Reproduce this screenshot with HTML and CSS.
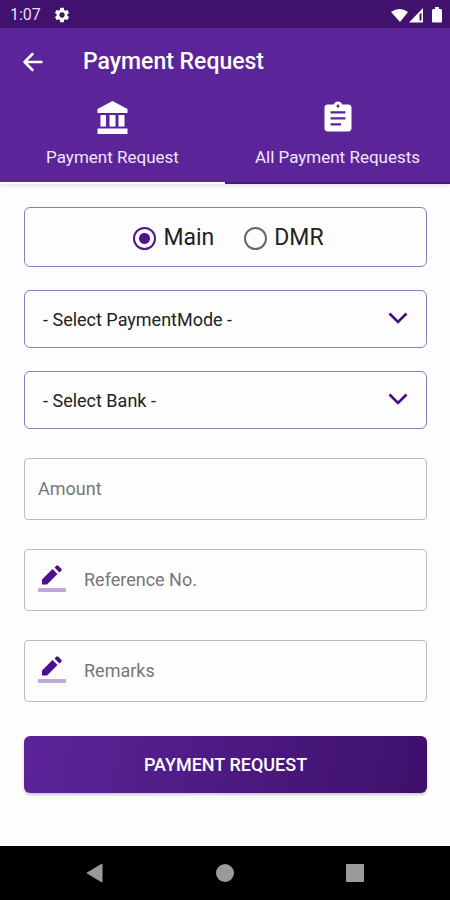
FILE: index.html
```html
<!DOCTYPE html>
<html lang="en">
<head>
<meta charset="utf-8">
<meta name="viewport" content="width=device-width, initial-scale=1">
<title>Payment Request</title>
<link rel="stylesheet" href="styles.css">
</head>
<body>
<div class="screen">
  <div class="status">
    <span class="time">1:07</span>
    <svg class="gear" viewBox="0 0 24 24" width="18" height="18" aria-hidden="true"><path fill="currentColor" d="M19.14 12.94c.04-.3.06-.61.06-.94 0-.32-.02-.64-.07-.94l2.03-1.58c.18-.14.23-.41.12-.61l-1.92-3.32c-.12-.22-.37-.29-.59-.22l-2.39.96c-.5-.38-1.03-.7-1.62-.94l-.36-2.54c-.04-.24-.24-.41-.48-.41h-3.84c-.24 0-.43.17-.47.41l-.36 2.54c-.59.24-1.13.57-1.62.94l-2.39-.96c-.22-.08-.47 0-.59.22L2.74 8.87c-.12.21-.08.47.12.61l2.03 1.58c-.05.3-.09.63-.09.94s.02.64.07.94l-2.03 1.58c-.18.14-.23.41-.12.61l1.92 3.32c.12.22.37.29.59.22l2.39-.96c.5.38 1.03.7 1.62.94l.36 2.54c.05.24.24.41.48.41h3.84c.24 0 .44-.17.47-.41l.36-2.54c.59-.24 1.13-.56 1.62-.94l2.39.96c.22.08.47 0 .59-.22l1.92-3.32c.12-.22.07-.47-.12-.61l-2.01-1.58zM12 15.6c-1.98 0-3.6-1.62-3.6-3.6s1.62-3.6 3.6-3.6 3.6 1.62 3.6 3.6-1.62 3.6-3.6 3.6z"/></svg>
    <svg class="signals" viewBox="0 0 54 18" width="54" height="18" aria-hidden="true">
      <path fill="currentColor" d="M1 6Q9.500 0 18 6L10 16ZM19 16.500 33 2V16.500Z"/>
      <path class="signal-gap" d="M29.500 8V14.500H31.500V7Z"/>
      <path fill="currentColor" d="M43 3H45V1H49V3H51Q52 3 52 5V15Q52 16.500 51 16.500H43Q42 16.500 42 15V5Q42 3 43 3Z"/>
    </svg>
  </div>
  <header class="top">
    <div class="bar">
      <button class="back" type="button" aria-label="Back"><svg viewBox="0 0 28 28" width="28" height="28"><path d="M22.500 14H6M13.500 6 5.500 14l8 8" fill="none" stroke="currentColor" stroke-width="2.500" stroke-linecap="round" stroke-linejoin="round"/></svg></button>
      <h1 class="title">Payment Request</h1>
    </div>
    <nav class="tabs">
      <a class="tab active" href="#request" aria-current="page">
        <svg viewBox="0 0 36 36" width="36" height="36" aria-hidden="true"><path fill="currentColor" d="M17.500 1 32.500 9V13H2.500V9ZM5.500 15h5.500v11.500H5.500ZM14.500 15h6v11.500h-6ZM23.500 15h6v11.500h-6ZM2.500 28.500h30v5.500H2.500Z"/></svg>
        <span>Payment Request</span>
      </a>
      <a class="tab" href="#all">
        <svg viewBox="0 0 24 24" width="36" height="36" aria-hidden="true"><path fill="currentColor" fill-rule="evenodd" d="M19 3h-4.180C14.400 1.840 13.300 1 12 1S9.600 1.840 9.180 3H5c-1.100 0-2 .9-2 2v14c0 1.100.9 2 2 2h14c1.100 0 2-.9 2-2V5c0-1.100-.9-2-2-2Zm-7 0c.55 0 1 .45 1 1s-.45 1-1 1-1-.45-1-1 .45-1 1-1Zm2 14H7v-1.500h7v1.500Zm3-4H7v-1.500h10v1.500Zm0-4H7V7.500h10v1.500Z"/></svg>
        <span>All Payment Requests</span>
      </a>
    </nav>
  </header>
  <form class="form">
    <div class="box types" role="radiogroup" aria-label="Wallet">
      <label class="choice"><input type="radio" name="wallet" checked><span>Main</span></label>
      <label class="choice"><input type="radio" name="wallet"><span>DMR</span></label>
    </div>
    <div class="box pick">
      <select class="select" aria-label="Payment mode"><option>- Select PaymentMode -</option></select>
      <svg class="chevron" viewBox="0 0 20 14" width="20" height="14" aria-hidden="true"><path d="M1.500 1.500 10 10l8.500-8.500" fill="none" stroke="currentColor" stroke-width="2.600"/></svg>
    </div>
    <div class="box pick">
      <select class="select" aria-label="Bank"><option>- Select Bank -</option></select>
      <svg class="chevron" viewBox="0 0 20 14" width="20" height="14" aria-hidden="true"><path d="M1.500 1.500 10 10l8.500-8.500" fill="none" stroke="currentColor" stroke-width="2.600"/></svg>
    </div>
    <div class="box field">
      <input class="input" type="text" inputmode="decimal" placeholder="Amount" aria-label="Amount">
    </div>
    <div class="box field">
      <svg class="pen" viewBox="0 0 28 28" width="28" height="28" aria-hidden="true"><path class="pen-line" d="M0 23H28V27H0Z"/><path fill="currentColor" d="M4 14.500 14.500 4l5 5L9 19.500H4ZM16.500 2.500l1.800-1.800q1-.8 2 0l3 3q.8 1 0 2L21.500 7.500Z"/></svg>
      <input class="input" type="text" placeholder="Reference No." aria-label="Reference No.">
    </div>
    <div class="box field">
      <svg class="pen" viewBox="0 0 28 28" width="28" height="28" aria-hidden="true"><path class="pen-line" d="M0 23H28V27H0Z"/><path fill="currentColor" d="M4 14.500 14.500 4l5 5L9 19.500H4ZM16.500 2.500l1.800-1.800q1-.8 2 0l3 3q.8 1 0 2L21.500 7.500Z"/></svg>
      <input class="input" type="text" placeholder="Remarks" aria-label="Remarks">
    </div>
    <button class="submit" type="submit">PAYMENT REQUEST</button>
  </form>
  <div class="system">
    <button class="key" type="button" aria-label="System back"><svg viewBox="0 0 20 20" width="20" height="20"><path d="M17 1V19L2 10Z" fill="currentColor" stroke="currentColor" stroke-linejoin="round"/></svg></button>
    <button class="key" type="button" aria-label="Home"><svg viewBox="0 0 20 20" width="20" height="20"><circle cx="10" cy="10" r="9" fill="currentColor"/></svg></button>
    <button class="key" type="button" aria-label="Recent apps"><svg viewBox="0 0 20 20" width="20" height="20"><rect x="1" y="1" width="18" height="18" rx="1" fill="currentColor"/></svg></button>
  </div>
</div>
</body>
</html>
```
FILE: styles.css
```css
* { box-sizing: border-box; }

body {
  margin: 0;
  background: #fdfdfd;
  color: #222;
  font-family: Roboto, "Liberation Sans", sans-serif;
}

button, input, select { font: inherit; }

svg { display: block; flex: none; }

.screen {
  display: flex;
  flex-direction: column;
  min-height: 100vh;
}

.status {
  display: flex;
  align-items: center;
  height: 28px;
  padding: 2px 6px 0 10px;
  background: #40116d;
  color: #fff;
}

.time {
  font-size: 16px;
  line-height: 20px;
  color: #e6dcee;
}

.gear { margin-left: 12px; }
.signals { margin-left: auto; }
.signal-gap { fill: #40116d; }

.top {
  background: #5c2499;
  color: #fff;
  box-shadow: 0 2px 4px rgba(0, 0, 0, 0.1);
}

.bar {
  display: flex;
  align-items: center;
  gap: 36px;
  height: 66px;
  padding: 1px 19px 0;
}

.back {
  padding: 0;
  border: 0;
  background: none;
  color: inherit;
}

.title {
  margin: 0;
  font-size: 23px;
  font-weight: 500;
  line-height: 28px;
}

.tabs {
  display: grid;
  grid-template-columns: 1fr 1fr;
}

.tab {
  display: flex;
  flex-direction: column;
  align-items: center;
  gap: 9px;
  height: 90px;
  padding-top: 6px;
  border-bottom: 2px solid #4c1688;
  color: #efe6f8;
  font-size: 17px;
  line-height: 24px;
  text-decoration: none;
  white-space: nowrap;
}

.tab svg { color: #fff; }
.tab.active { border-color: #fff; }

.form {
  display: flex;
  flex-direction: column;
  flex: 1;
  gap: 23px;
  padding: 23px 23px 48px 24px;
}

.box {
  display: flex;
  align-items: center;
  border: 1px solid #8c80b8;
  border-radius: 6px;
}

.types {
  justify-content: center;
  gap: 30px;
  height: 60px;
  padding: 2px 0 0 6px;
}

.choice {
  display: flex;
  align-items: center;
  gap: 7px;
  font-size: 23px;
  line-height: 28px;
}

.choice input {
  appearance: none;
  width: 23px;
  height: 23px;
  margin: 0;
  border: 2px solid #666;
  border-radius: 50%;
}

.choice input:checked {
  border-color: #4f1590;
  background: radial-gradient(circle, #4f1590 5px, transparent 6px);
}

.pick {
  display: grid;
  height: 58px;
}

.select, .chevron { grid-area: 1 / 1; }

.select {
  appearance: none;
  width: 100%;
  height: 56px;
  padding: 0 48px 0 18px;
  border: 0;
  background: none;
  color: #222;
  font-size: 18px;
}

.chevron {
  justify-self: end;
  margin-right: 18px;
  color: #430d82;
  pointer-events: none;
}

.field {
  gap: 18px;
  height: 62px;
  margin-top: 6px;
  padding: 0 13px 2px;
  border-color: #bdbdbd;
  border-radius: 4px;
}

.pen { color: #4b108c; }
.pen-line { fill: #c0a9da; }

.input {
  flex: 1;
  min-width: 0;
  height: 56px;
  padding: 0;
  border: 0;
  outline: 0;
  background: none;
  font-size: 18px;
}

.input::placeholder { color: #777; opacity: 1; }

.submit {
  height: 57px;
  margin-top: 11px;
  border: 0;
  border-radius: 6px;
  background: linear-gradient(100deg, #5c2499, #3e106b);
  box-shadow: 0 2px 3px rgba(0, 0, 0, 0.2);
  color: #fff;
  font-size: 18px;
  font-weight: 500;
}

.system {
  display: flex;
  align-items: center;
  justify-content: center;
  gap: 110px;
  height: 54px;
  background: #000;
}

.key {
  padding: 0;
  border: 0;
  background: none;
  color: #9b9b9b;
}
```
